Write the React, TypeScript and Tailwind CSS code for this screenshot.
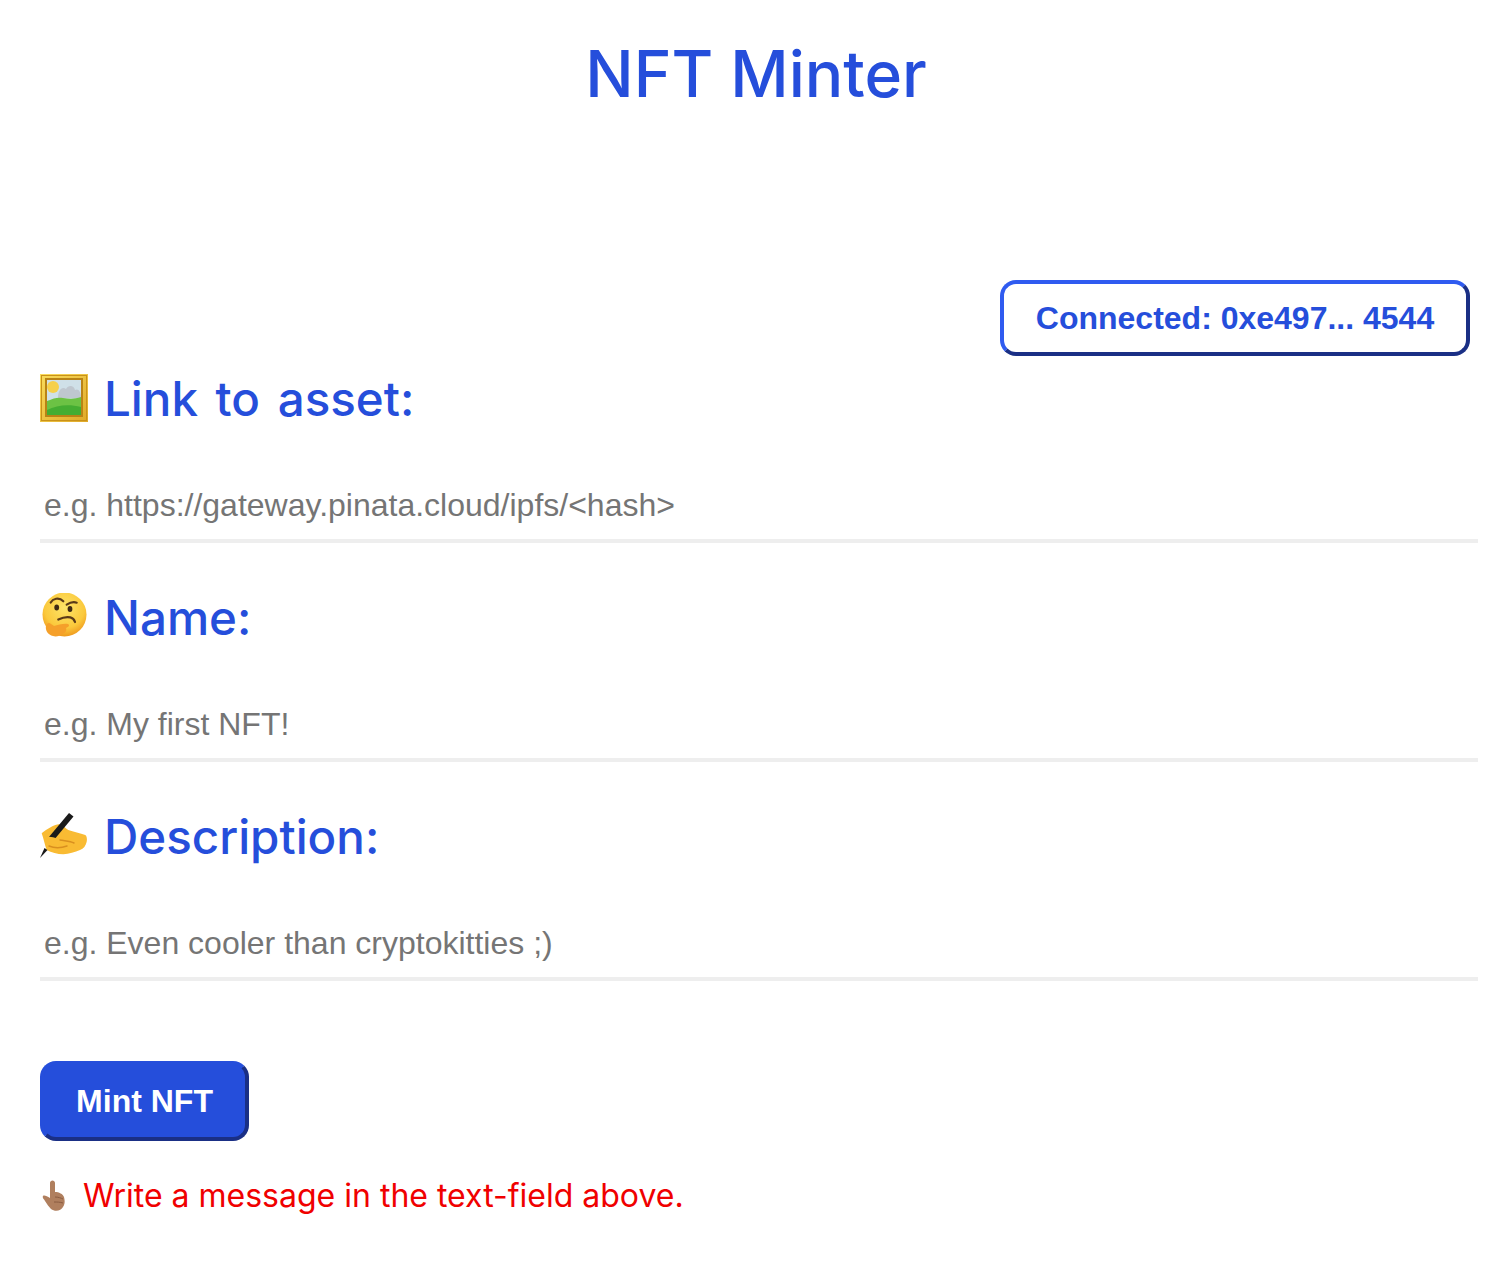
import type { ReactNode } from 'react'

const font = "font-['Liberation_Sans',Arial,sans-serif]"
const headingFont = "font-['Inter',sans-serif]"

function FrameEmoji() {
    return (
        <svg width="48" height="48" viewBox="0 0 48 48" className="shrink-0">
            <defs>
                <linearGradient id="frame" x1="0" y1="0" x2="1" y2="1">
                    <stop offset="0%" stopColor="#f9dc5c" />
                    <stop offset="100%" stopColor="#e0a928" />
                </linearGradient>
                <clipPath id="pic">
                    <rect x="7" y="6" width="34" height="35" />
                </clipPath>
            </defs>
            <rect x="0" y="0" width="48" height="48" fill="url(#frame)" />
            <rect x="1.5" y="1.5" width="45" height="45" fill="none" stroke="#c9921a" strokeWidth="1" />
            <rect x="5" y="4" width="38" height="39" fill="#b98316" />
            <g clipPath="url(#pic)">
                <rect x="7" y="6" width="34" height="35" fill="#cfe0e8" />
                <circle cx="13" cy="13" r="6" fill="#f6d04a" />
                <path d="M18 24c0-8 4-12 8-9 2-4 8-4 9 1 3-2 6 1 6 8z" fill="#bfc7cf" />
                <path d="M7 27c7-3 11-4 16-3 7 1 12 1 18-1v18H7z" fill="#6cc244" />
                <path d="M7 36c10-5 22-6 34-3v8H7z" fill="#44ad32" />
            </g>
        </svg>
    )
}

function ThinkingEmoji() {
    return (
        <svg width="48" height="48" viewBox="0 0 48 48" className="shrink-0">
            <defs>
                <radialGradient id="face" cx="50%" cy="35%" r="65%">
                    <stop offset="0%" stopColor="#fde468" />
                    <stop offset="70%" stopColor="#fbc93c" />
                    <stop offset="100%" stopColor="#ef9a1e" />
                </radialGradient>
            </defs>
            <circle cx="24.5" cy="21.5" r="22" fill="url(#face)" />
            <path d="M10.7 9.5c2-3.500 8-6 12.600-1.200" fill="none" stroke="#5a3a18" strokeWidth="2.200" strokeLinecap="round" />
            <path d="M26.700 11.700c3-2 7-3 10-2" fill="none" stroke="#5a3a18" strokeWidth="2.200" strokeLinecap="round" />
            <ellipse cx="16.700" cy="14.500" rx="2.400" ry="3" fill="#3f2a14" />
            <ellipse cx="30" cy="16" rx="2.400" ry="3" fill="#3f2a14" />
            <path d="M18.300 26.500c4-2 8-3 12-2.200 2 .4 4 2.500 4.700 4.700" fill="none" stroke="#5a3a18" strokeWidth="2.200" strokeLinecap="round" />
            <path d="M6 33c1-3 3-4 5-2l3 2c4-1 10-3 14-2 2 1 1 3-2 4 1 3-1 5-3 6-3 2-7 3-10 2-5-1-8-6-7-10z" fill="#f5a02a" />
        </svg>
    )
}

function WritingEmoji() {
    return (
        <svg width="48" height="48" viewBox="0 0 48 48" className="shrink-0">
            <path d="M1.700 21.300c5-4 11-8 16.600-9 4-.5 7 4 10 5.700 5 2 12 3 17 5 1.500 1 2 4 1.400 6.700-1 4-3 7-6.700 8.300-5 2-11 4-16.700 4.300-6 0-12-2-16.600-4.300-2-5-3-11-5-16.700z" fill="#f9bb33" />
            <path d="M29 1l4.500 3.500-20 24-5-3z" fill="#1a1a1a" />
            <path d="M6 24c4 1 10 1 14 4 3 2 2 5-1 5-5 0-10-1-14-3z" fill="#f9bb33" />
            <path d="M9 34c5 2 12 2 18 0M20 28c5 1 10 1 14 3" fill="none" stroke="#d98f1f" strokeWidth="1.500" strokeLinecap="round" />
            <path d="M4.500 36l3 2-7.500 8z" fill="#1a1a1a" />
        </svg>
    )
}

function PointingEmoji() {
    return (
        <svg width="24" height="32" viewBox="0 0 24 32" className="shrink-0">
            <path d="M8 3c0-3.500 5-3.500 5 0v9c4 0 8 2 9 5 1 4 1 7-1 10-2 4-8 5-12 2-2-2-4-5-6-8-1-2-3-3-2-5 1-1 4 0 7 2z" fill="#b07f5e" />
            <path d="M13 17c3 0 6 1 8 2M12 22c3 0 6 0 9 1" fill="none" stroke="#8a5b40" strokeWidth="1" />
        </svg>
    )
}

function Field({ icon, label, placeholder }: { icon: ReactNode; label: string; placeholder: string }) {
    return (
        <div>
            <h2 className={`${headingFont} flex items-center gap-4 h-12 text-[47.5px] leading-none font-medium text-[#254edb] [word-spacing:5px]`}>
                {icon}
                <span className="pt-[2px]">{label}</span>
            </h2>
            <input
                type="text"
                placeholder={placeholder}
                className="block mt-[37px] w-full h-[84px] px-1 pt-[13px] text-[32px] bg-white border-b-4 border-[#eeeeee] outline-none placeholder:text-[#757575]"
            />
        </div>
    )
}

export default function App() {
    return (
        <div className={`${font} bg-white min-h-[1276px] pl-10 pr-8 pt-[34px]`}>
            <h1 className={`${headingFont} text-center pr-[6px] text-[64px] leading-[80px] font-medium text-[#254edb]`}>NFT Minter</h1>

            {/* Wallet button */}
            <div className="flex justify-end pr-2 mt-[166px] mb-[18px]">
                <button className="w-[470px] h-[76px] rounded-2xl border-4 border-t-[#2f5bf0] border-l-[#2f5bf0] border-r-[#1a2f85] border-b-[#1a2f85] bg-white text-[32px] font-bold text-[#254edb]">
                    Connected: 0xe497... 4544
                </button>
            </div>

            <div className="flex flex-col gap-[50px]">
                <Field icon={<FrameEmoji />} label="Link to asset:" placeholder="e.g. https://gateway.pinata.cloud/ipfs/<hash>" />
                <Field icon={<ThinkingEmoji />} label="Name:" placeholder="e.g. My first NFT!" />
                <Field icon={<WritingEmoji />} label="Description:" placeholder="e.g. Even cooler than cryptokitties ;)" />
            </div>

            <button className="block mt-[80px] w-[209px] h-[80px] rounded-2xl border-4 border-t-[#254edb] border-l-[#254edb] border-r-[#1a2f85] border-b-[#1a2f85] bg-[#254edb] text-[32px] font-bold text-white">
                Mint NFT
            </button>

            <p className={`${headingFont} flex items-center gap-[17px] pl-[2px] mt-[37px] h-9 text-[32px] text-[#f00000]`}>
                <PointingEmoji />
                <span>Write a message in the text-field above.</span>
            </p>
        </div>
    )
}
